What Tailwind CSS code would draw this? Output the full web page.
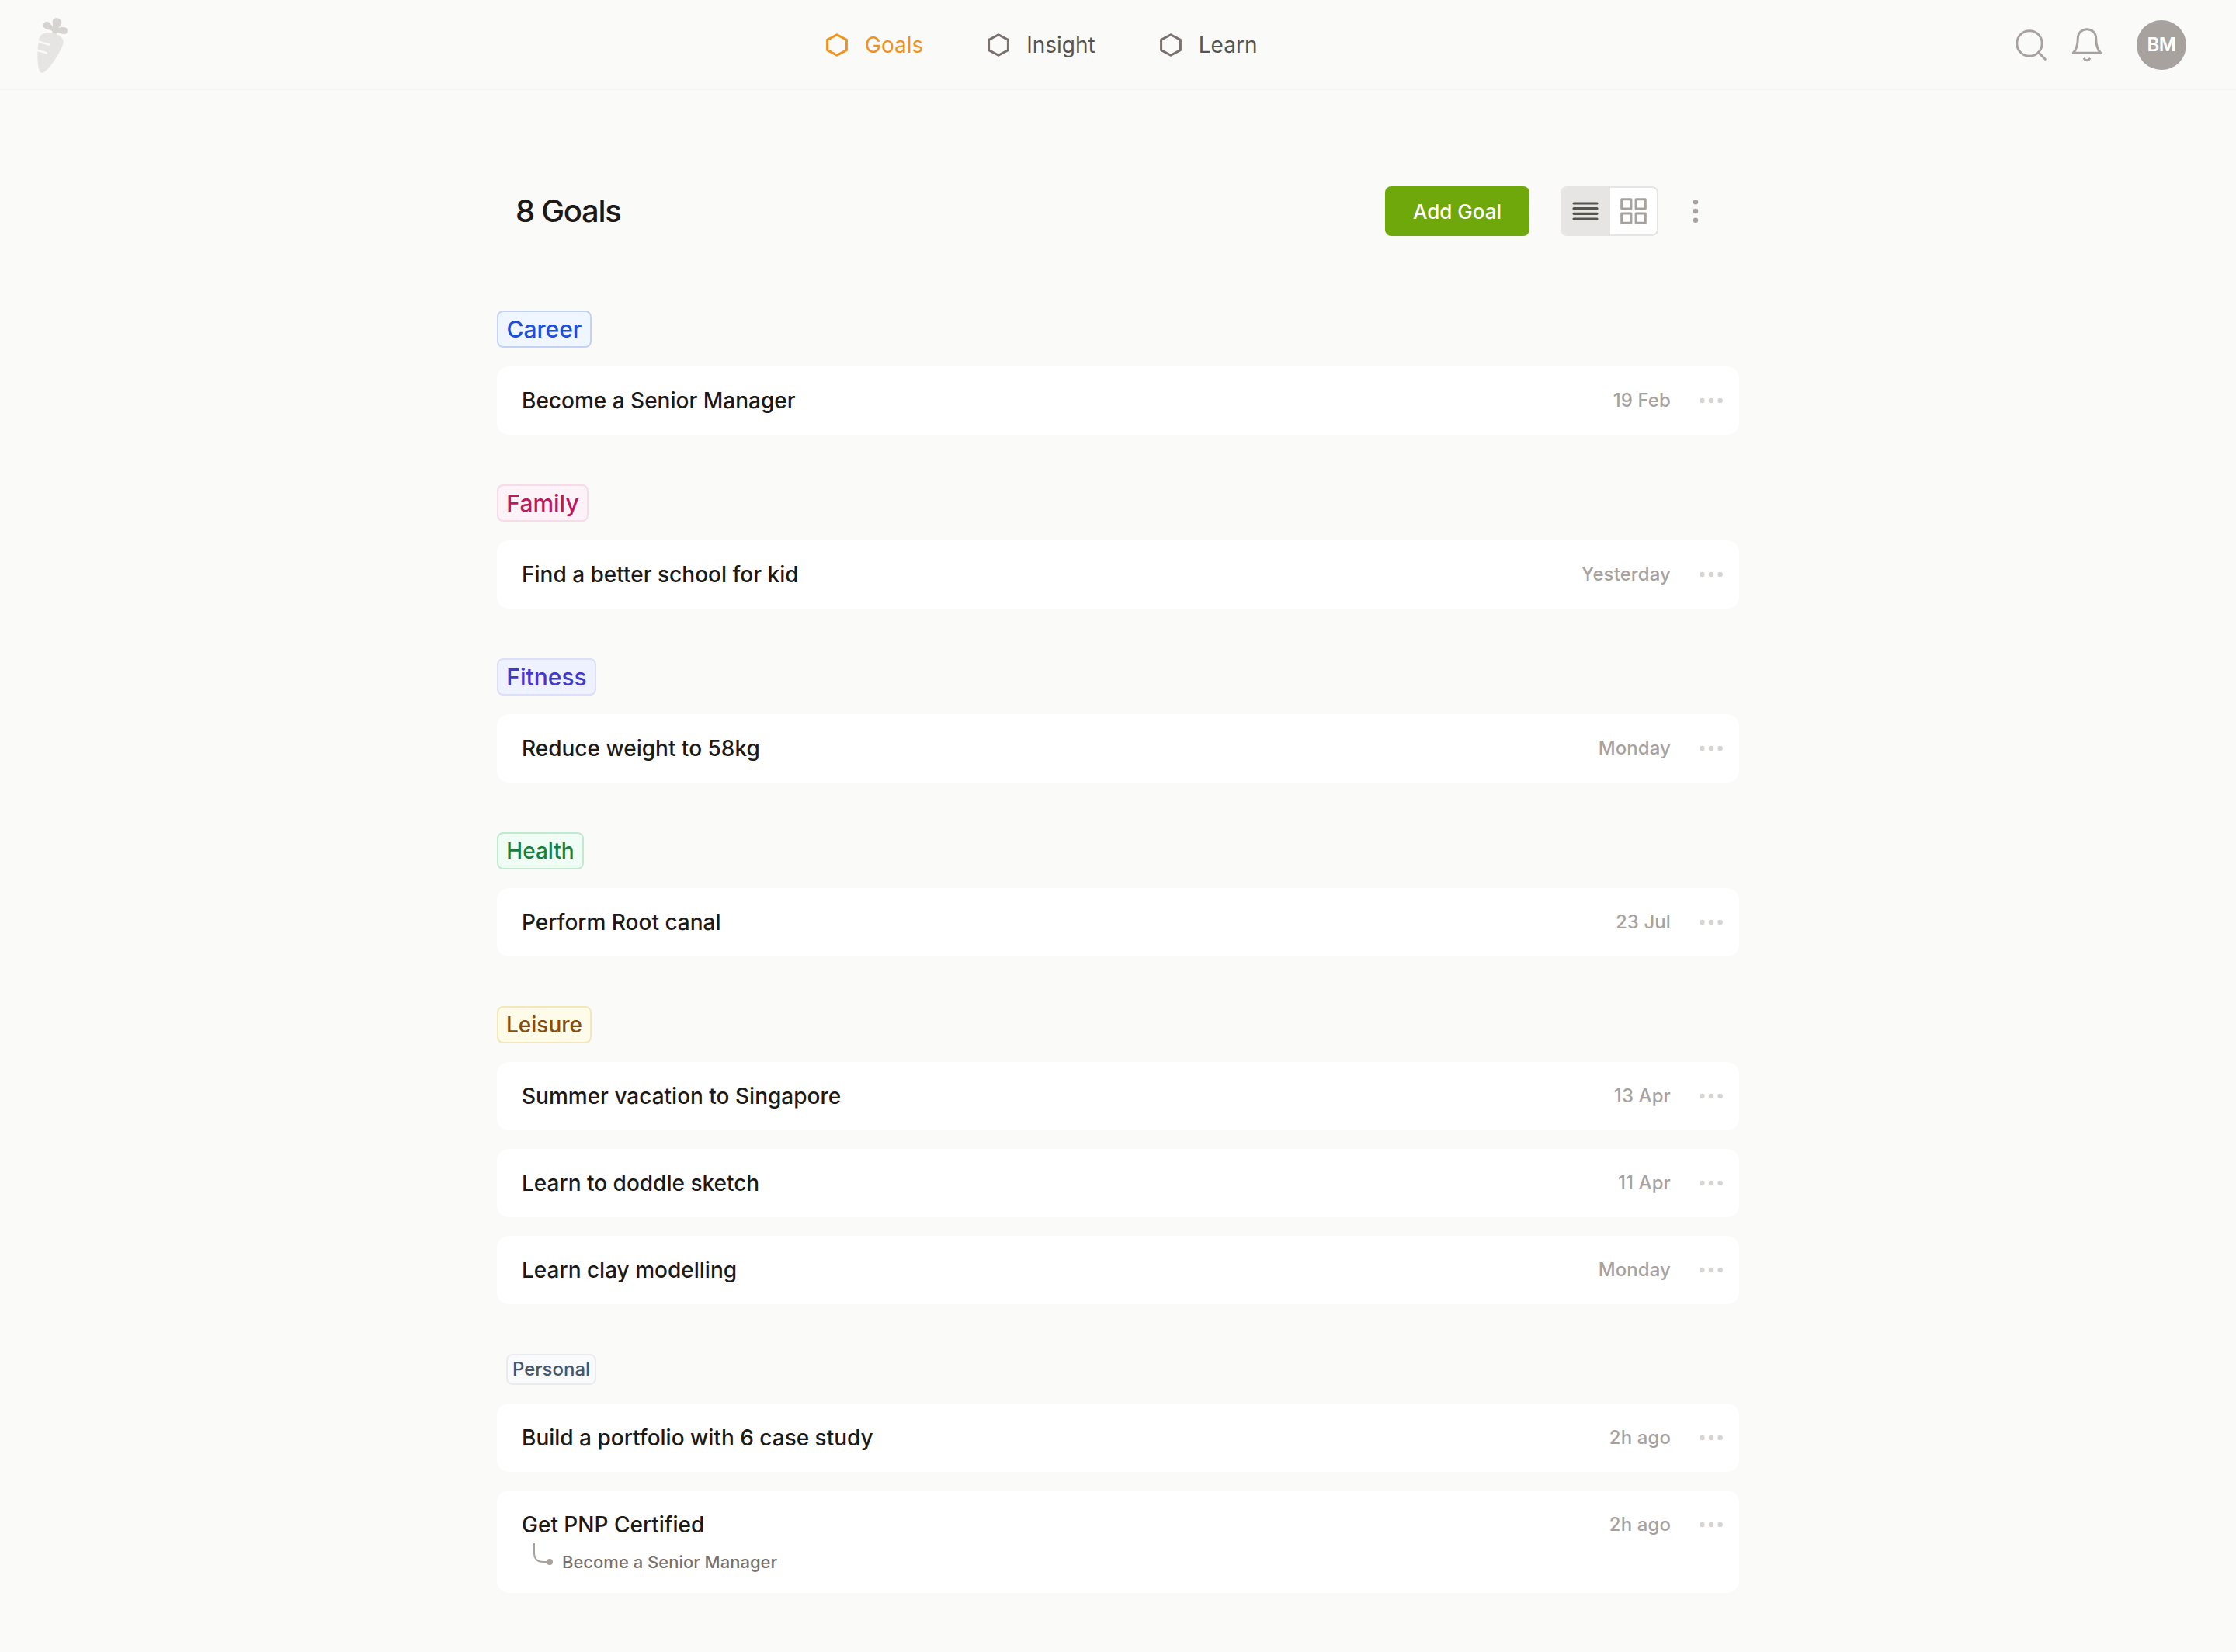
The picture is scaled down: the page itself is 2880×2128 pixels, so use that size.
<!DOCTYPE html>
<html lang="en">
<head>
<meta charset="utf-8">
<title>Goals</title>
<script src="https://cdn.jsdelivr.net/npm/@tailwindcss/browser@4"></script>
</head>
<body class="min-h-screen bg-[#fafaf9] font-[Inter,sans-serif] text-stone-900">

<svg class="hidden">
  <symbol id="hexagon" viewBox="0 0 32 32"><path d="M16 2.7 28.4 9.4V22.6L16 29.3 3.6 22.6V9.4Z" fill="none" stroke="currentColor" stroke-width="3" stroke-linejoin="round"/></symbol>
  <symbol id="dots" viewBox="0 0 32 32"><g fill="currentColor"><circle cx="4.3" cy="16" r="3.25"/><circle cx="16" cy="16" r="3.25"/><circle cx="27.7" cy="16" r="3.25"/></g></symbol>
</svg>

<header class="flex h-[116px] items-center border-b-2 border-[#f4f4f3] pl-10 pr-16 pt-0.5">
  <div class="w-[1022px]">
    <svg class="h-[84px] w-14" viewBox="0 0 168 252">
      <path fill="#d6d3d1" d="M84 82C84 73 80 69 68 67C56 65 47 59 47 50C47 41 54 36 62 36C72 36 77 46 84 56C84 46 83 39 83 34C83 26 92 21 101 22C113 23 119 32 118 41C117 49 110 54 106 61C114 56 122 56 131 58C138 60 142 66 140 75C138 84 131 85 121 83C111 81 101 75 98 83Z"/>
      <path fill="#e7e5e4" d="M62 78C92 76 125 92 125 114C125 136 76 216 50 231C43 236 36 235 32 225C23 197 24 150 28 119C31 94 37 80 62 78Z"/>
      <path stroke="#fafaf9" stroke-width="8" stroke-linecap="round" fill="none" d="M22 111 68 124M20 145 59 157"/>
    </svg>
  </div>
  <nav class="flex items-center gap-[81px] text-[28px] leading-8 text-stone-600">
    <a class="flex items-center gap-5 text-[#f0921c]"><svg class="size-8"><use href="#hexagon"/></svg>Goals</a>
    <a class="flex items-center gap-5"><svg class="size-8 text-stone-500"><use href="#hexagon"/></svg>Insight</a>
    <a class="flex items-center gap-5"><svg class="size-8 text-stone-500"><use href="#hexagon"/></svg>Learn</a>
  </nav>
  <div class="flex flex-1 items-center justify-end text-[#a8a29e]">
    <svg class="mr-6 size-12" viewBox="0 0 48 48" fill="none" stroke="currentColor" stroke-width="3" stroke-linecap="round"><circle cx="22" cy="22" r="16.2"/><path d="M33.6 33.6 42.3 42.3"/></svg>
    <svg class="mr-10 size-12" viewBox="0 0 48 48" fill="none" stroke="currentColor" stroke-width="3" stroke-linecap="round" stroke-linejoin="round"><path d="M6.2 34.2C10.5 30 12.3 23.500 12.300 15.500C12.300 8.500 17.500 3.800 24 3.800S35.700 8.500 35.700 15.500C35.700 23.500 37.500 30 41.800 34.200Z"/><path d="M20.600 41.800C22.300 44.300 25.700 44.300 27.400 41.800"/></svg>
    <div class="flex size-16 items-center justify-center rounded-full bg-[#a8a29e] text-2xl font-semibold tracking-[-0.5px] text-white">BM</div>
  </div>
</header>

<main class="mx-auto w-[1600px] pt-[124px]">
  <div class="flex h-16 items-center pl-6">
    <h1 class="flex-1 text-[40px] font-medium leading-none tracking-[-1.3px]">8 Goals</h1>
    <button class="h-16 w-[186px] rounded-lg bg-[#6fa80a] text-[26px] font-medium text-white">Add Goal</button>
    <div class="ml-10 flex h-16 w-[126px] overflow-hidden rounded-lg border-2 border-stone-200 bg-white">
      <div class="flex w-[62px] items-center justify-center bg-stone-200">
        <svg class="size-9 text-stone-600" viewBox="0 0 36 36" stroke="currentColor" stroke-width="3.200" stroke-linecap="round"><path d="M2 8H32M2 14.700H32M2 21.300H32M2 28H32"/></svg>
      </div>
      <div class="flex w-[60px] items-center justify-center">
        <svg class="size-9 text-[#a8a29e]" viewBox="0 0 36 36" fill="none" stroke="currentColor" stroke-width="3" stroke-linejoin="round"><path d="M2.700 2.700h12.200v12.200H2.700zM21.100 2.700h12.200v12.200H21.100zM2.700 21.100h12.200v12.200H2.700zM21.100 21.100h12.200v12.200H21.100z"/></svg>
      </div>
    </div>
    <svg class="ml-8 mr-10 size-8 rotate-90 text-[#a8a29e]"><use href="#dots"/></svg>
  </div>

  <div id="groups" class="flex flex-col gap-16 pt-24"></div>
</main>

<script>
const groups = [
  ['Career', 'h-12 text-[30px] pb-px w-[122px] text-[#1d4ed8] bg-[#eff6ff] border-[#c3d3f8]', [['Become a Senior Manager', '19 Feb']]],
  ['Family', 'h-12 text-[30px] pb-px w-[118px] text-[#be185d] bg-[#fdf2f8] border-[#f7dbe8]', [['Find a better school for kid', 'Yesterday']]],
  ['Fitness', 'h-12 text-[30px] pb-px w-[128px] text-[#4338ca] bg-[#eef2ff] border-[#dcdefa]', [['Reduce weight to 58kg', 'Monday']]],
  ['Health', 'h-12 text-[28px] w-[112px] text-[#15803d] bg-[#f0fdf4] border-[#c0ebd1]', [['Perform Root canal', '23 Jul']]],
  ['Leisure', 'h-12 text-[28px] w-[122px] text-[#854d0e] bg-[#fefce8] border-[#f5e6b8]', [['Summer vacation to Singapore', '13 Apr'], ['Learn to doddle sketch', '11 Apr'], ['Learn clay modelling', 'Monday']]],
  ['Personal', 'ml-3 h-10 w-[116px] text-2xl text-[#475569] bg-[#f8fafc] border-[#e9ebef]', [['Build a portfolio with 6 case study', '2h ago'], ['Get PNP Certified', '2h ago', 'Become a Senior Manager']]],
];
document.getElementById('groups').innerHTML = groups.map(([name, cls, items]) => `
  <section class="flex flex-col gap-6">
    <h2 class="flex items-center justify-center rounded-lg border-2 font-medium leading-none ${cls}">${name}</h2>
    ${items.map(([title, date, parent]) => `
    <article class="rounded-2xl bg-white pl-8 pr-5">
      <div class="flex h-[88px] items-center">
        <h3 class="flex-1 text-[28px] font-medium leading-8">${title}</h3>
        <time class="text-2xl font-[450] tracking-[0.1px] text-[#a8a29e]">${date}</time>
        <svg class="ml-9 size-8 text-[#d6d3d1]"><use href="#dots"/></svg>
      </div>
      ${parent ? `
      <div class="-mt-5 flex h-16 pl-[15px] text-[#a8a29e]">
        <svg class="h-[30px] w-[26px]" viewBox="0 0 26 30"><path d="M1 0V12Q1 24 13 24H18" fill="none" stroke="currentColor" stroke-width="2"/><circle cx="21" cy="24" r="4" fill="currentColor"/></svg>
        <p class="ml-[11px] mt-2 text-[22px] font-[450] leading-8 text-stone-500">${parent}</p>
      </div>` : ''}
    </article>`).join('')}
  </section>`).join('');
</script>
</body>
</html>
